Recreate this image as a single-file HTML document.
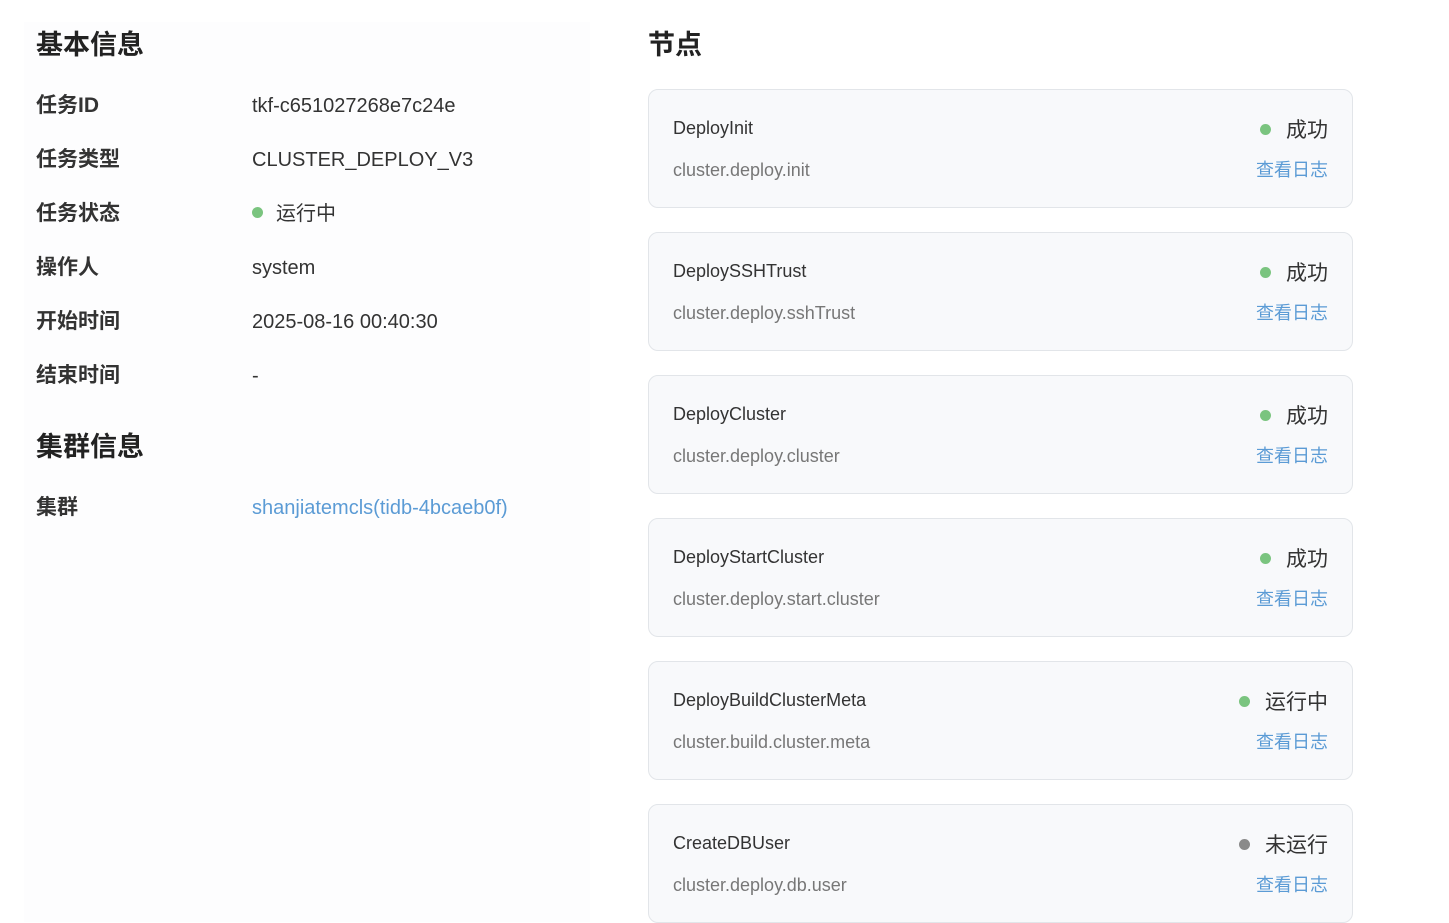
<!DOCTYPE html>
<html><head><meta charset="utf-8"><style>
body{margin:0;width:1449px;height:920px;background:#fff;font-family:"Liberation Sans","Noto Sans CJK SC",sans-serif;color:#333;position:relative;overflow:hidden}
.panel{position:absolute;left:24px;top:22px;width:566px;height:900px;background:#fdfdfe}
h2{position:absolute;margin:0;font-size:27px;font-weight:bold;color:#222;line-height:1}
.lab{position:absolute;left:36px;font-size:21px;font-weight:bold;color:#333;line-height:1}
.val{position:absolute;left:252px;font-size:20px;color:#333;line-height:1}
.dot{display:inline-block;width:11px;height:11px;border-radius:50%;background:#7ac47f;margin-right:13px;vertical-align:2px}
.card{position:absolute;left:648px;width:703px;height:117px;border:1px solid #e2e5e9;border-radius:10px;background:#f8f9fb}
.t{position:absolute;left:24px;top:29px;font-size:18px;color:#333;line-height:1}
.s{position:absolute;left:24px;top:71px;font-size:18px;color:#777;line-height:1}
.st{position:absolute;right:24px;top:30px;font-size:21px;color:#333;line-height:1}
.st .dot{margin-right:15px}
.lk{position:absolute;right:24px;top:71px;font-size:18px;color:#5b9bd5;line-height:1}
</style></head><body>
<div class="panel"></div>
<h2 style="left:36px;top:32px">基本信息</h2>
<h2 style="left:648px;top:32px">节点</h2>
<div class="lab" style="top:95px">任务ID</div><div class="val" style="top:96px">tkf-c651027268e7c24e</div>
<div class="lab" style="top:149px">任务类型</div><div class="val" style="top:150px">CLUSTER_DEPLOY_V3</div>
<div class="lab" style="top:203px">任务状态</div><div class="val" style="top:204px"><span class="dot"></span>运行中</div>
<div class="lab" style="top:257px">操作人</div><div class="val" style="top:258px">system</div>
<div class="lab" style="top:311px">开始时间</div><div class="val" style="top:312px">2025-08-16 00:40:30</div>
<div class="lab" style="top:365px">结束时间</div><div class="val" style="top:366px">-</div>
<h2 style="left:36px;top:434px">集群信息</h2>
<div class="lab" style="top:497px">集群</div><div class="val" style="top:498px;color:#5b9bd5">shanjiatemcls(tidb-4bcaeb0f)</div>

<div class="card" style="top:89px"><div class="t">DeployInit</div><div class="s">cluster.deploy.init</div><div class="st"><span class="dot"></span>成功</div><div class="lk">查看日志</div></div>
<div class="card" style="top:232px"><div class="t">DeploySSHTrust</div><div class="s">cluster.deploy.sshTrust</div><div class="st"><span class="dot"></span>成功</div><div class="lk">查看日志</div></div>
<div class="card" style="top:375px"><div class="t">DeployCluster</div><div class="s">cluster.deploy.cluster</div><div class="st"><span class="dot"></span>成功</div><div class="lk">查看日志</div></div>
<div class="card" style="top:518px"><div class="t">DeployStartCluster</div><div class="s">cluster.deploy.start.cluster</div><div class="st"><span class="dot"></span>成功</div><div class="lk">查看日志</div></div>
<div class="card" style="top:661px"><div class="t">DeployBuildClusterMeta</div><div class="s">cluster.build.cluster.meta</div><div class="st"><span class="dot"></span>运行中</div><div class="lk">查看日志</div></div>
<div class="card" style="top:804px"><div class="t">CreateDBUser</div><div class="s">cluster.deploy.db.user</div><div class="st"><span class="dot" style="background:#8a8a8a"></span>未运行</div><div class="lk">查看日志</div></div>
</body></html>
